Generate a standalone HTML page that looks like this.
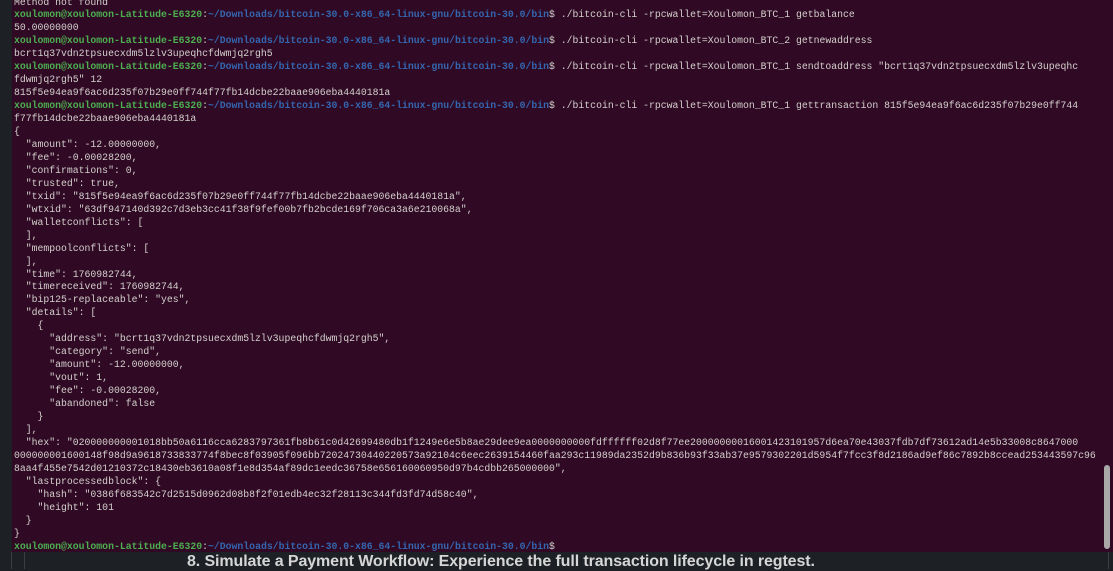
<!DOCTYPE html>
<html><head><meta charset="utf-8"><style>
html,body{margin:0;padding:0;width:1113px;height:569px;overflow:hidden;background:#1d2025;}
#term{position:absolute;left:12px;top:0;width:1101px;height:552px;background:#300a24;overflow:hidden;}
pre{margin:0;position:absolute;left:2px;top:-3.5px;font-family:"Liberation Mono",monospace;font-size:9.8px;line-height:12.95px;color:#d3d0cd;white-space:pre;}
.g{color:#4caf50;font-weight:bold}.b{color:#3466b0;font-weight:bold}
#sb{position:absolute;left:1092px;top:465px;width:6px;height:84px;background:#a9a9a9;border-radius:3px;}
#bot{position:absolute;left:0;top:552px;width:1113px;height:17px;background:#1d2025;}
.vl{position:absolute;top:552px;width:1px;height:17px;background:#3a3d42;}
#cap{position:absolute;left:187px;top:553px;font-family:"Liberation Sans",sans-serif;font-weight:bold;font-size:16px;letter-spacing:-0.1px;color:#d6d6d6;white-space:nowrap;line-height:18px;}
</style></head><body>
<div id="term"><pre>Method not found
<span class="g">xoulomon@xoulomon-Latitude-E6320</span>:<span class="b">~/Downloads/bitcoin-30.0-x86_64-linux-gnu/bitcoin-30.0/bin</span>$ ./bitcoin-cli -rpcwallet=Xoulomon_BTC_1 getbalance
50.00000000
<span class="g">xoulomon@xoulomon-Latitude-E6320</span>:<span class="b">~/Downloads/bitcoin-30.0-x86_64-linux-gnu/bitcoin-30.0/bin</span>$ ./bitcoin-cli -rpcwallet=Xoulomon_BTC_2 getnewaddress
bcrt1q37vdn2tpsuecxdm5lzlv3upeqhcfdwmjq2rgh5
<span class="g">xoulomon@xoulomon-Latitude-E6320</span>:<span class="b">~/Downloads/bitcoin-30.0-x86_64-linux-gnu/bitcoin-30.0/bin</span>$ ./bitcoin-cli -rpcwallet=Xoulomon_BTC_1 sendtoaddress "bcrt1q37vdn2tpsuecxdm5lzlv3upeqhc
fdwmjq2rgh5" 12
815f5e94ea9f6ac6d235f07b29e0ff744f77fb14dcbe22baae906eba4440181a
<span class="g">xoulomon@xoulomon-Latitude-E6320</span>:<span class="b">~/Downloads/bitcoin-30.0-x86_64-linux-gnu/bitcoin-30.0/bin</span>$ ./bitcoin-cli -rpcwallet=Xoulomon_BTC_1 gettransaction 815f5e94ea9f6ac6d235f07b29e0ff744
f77fb14dcbe22baae906eba4440181a
{
  "amount": -12.00000000,
  "fee": -0.00028200,
  "confirmations": 0,
  "trusted": true,
  "txid": "815f5e94ea9f6ac6d235f07b29e0ff744f77fb14dcbe22baae906eba4440181a",
  "wtxid": "63df947140d392c7d3eb3cc41f38f9fef00b7fb2bcde169f706ca3a6e210068a",
  "walletconflicts": [
  ],
  "mempoolconflicts": [
  ],
  "time": 1760982744,
  "timereceived": 1760982744,
  "bip125-replaceable": "yes",
  "details": [
    {
      "address": "bcrt1q37vdn2tpsuecxdm5lzlv3upeqhcfdwmjq2rgh5",
      "category": "send",
      "amount": -12.00000000,
      "vout": 1,
      "fee": -0.00028200,
      "abandoned": false
    }
  ],
  "hex": "020000000001018bb50a6116cca6283797361fb8b61c0d42699480db1f1249e6e5b8ae29dee9ea0000000000fdffffff02d8f77ee20000000016001423101957d6ea70e43037fdb7df73612ad14e5b33008c8647000
000000001600148f98d9a9618733833774f8bec8f03905f096bb72024730440220573a92104c6eec2639154460faa293c11989da2352d9b836b93f33ab37e9579302201d5954f7fcc3f8d2186ad9ef86c7892b8ccead253443597c96
8aa4f455e7542d01210372c18430eb3610a08f1e8d354af89dc1eedc36758e656160060950d97b4cdbb265000000",
  "lastprocessedblock": {
    "hash": "0386f683542c7d2515d0962d08b8f2f01edb4ec32f28113c344fd3fd74d58c40",
    "height": 101
  }
}
<span class="g">xoulomon@xoulomon-Latitude-E6320</span>:<span class="b">~/Downloads/bitcoin-30.0-x86_64-linux-gnu/bitcoin-30.0/bin</span>$</pre>
<div id="sb"></div>
</div>
<div id="bot"></div>
<div class="vl" style="left:11px"></div>
<div class="vl" style="left:24px"></div>
<div class="vl" style="left:1108px"></div>
<div id="cap">8. Simulate a Payment Workflow: Experience the full transaction lifecycle in regtest.</div>
</body></html>
